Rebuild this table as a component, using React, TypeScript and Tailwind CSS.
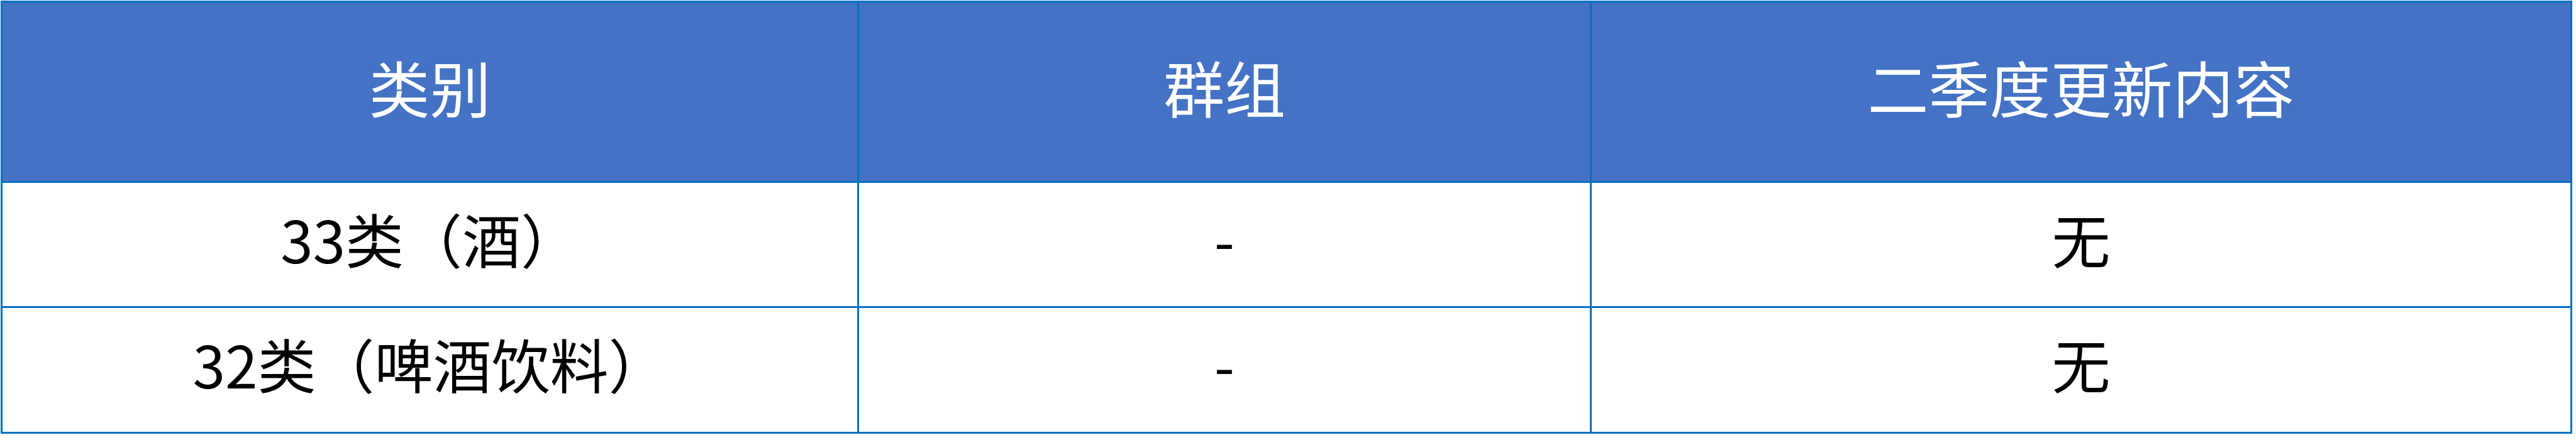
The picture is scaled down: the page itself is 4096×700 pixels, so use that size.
const header = ["类别", "群组", "二季度更新内容"];

const rows = [
  ["33类（酒）", "-", "无"],
  ["32类（啤酒饮料）", "-", "无"],
];

export default function App() {
  return (
    <div className="w-[4096px] h-[700px] bg-white pt-px pl-px font-['Noto_Sans_CJK_SC',sans-serif]">
      <div className="grid w-[4089px] grid-cols-[1362px_1165px_1556px] grid-rows-[287px_199px_197px] border-[3px] border-[#0070C0]">
        {header.map((h, i) => (
          <div
            key={h}
            className={`flex items-center justify-center bg-[#4472C4] border-b-[3px] border-[#0070C0] pb-[20px] text-[97px] leading-none text-white ${
              i < 2 ? "border-r-[3px]" : ""
            }`}
          >
            {h}
          </div>
        ))}
        {rows.map((row, r) =>
          row.map((cell, i) => (
            <div
              key={`${r}-${i}`}
              className={`flex items-center justify-center bg-white border-[#0070C0] pb-[22px] text-[93px] leading-none text-black ${
                i < 2 ? "border-r-[3px]" : ""
              } ${r === 0 ? "border-b-[3px]" : ""}`}
            >
              {cell}
            </div>
          ))
        )}
      </div>
    </div>
  );
}
